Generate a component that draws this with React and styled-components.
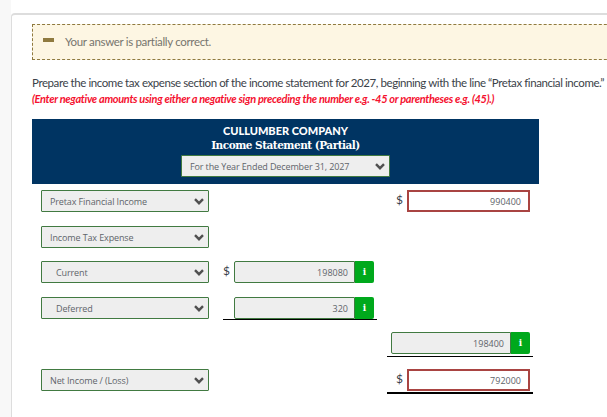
import React from "react";
import styled, { createGlobalStyle } from "styled-components";

const GlobalStyle = createGlobalStyle`
  html, body {
    margin: 0;
    padding: 0;
    height: 100%;
    overflow: hidden;
    background: #f8f8f8;
  }
`;

const Page = styled.div`
  width: 607px;
  height: 417px;
  overflow: hidden;
  padding: 0 0 0 11px;
  box-sizing: border-box;
  font-family: "Lato", sans-serif;
`;

const Main = styled.div`
  width: 640px;
  height: 417px;
  background: #fff;
  padding-top: 13px;
  box-sizing: border-box;
`;

const Card = styled.div`
  height: 404px;
  box-sizing: border-box;
  border-left: 1px solid #ddd;
  border-top: 2px solid #ddd;
  border-radius: 4px 0 0 0;
  padding: 9px 0 0 20px;
`;

const Alert = styled.div`
  display: flex;
  align-items: center;
  height: 36px;
  width: 620px;
  box-sizing: border-box;
  background: #fdf6e3;
  border: 1px dashed #8f7a3f;
  padding: 0 0 1px 10px;
  color: #77756e;
  font-size: 11.5px;
  letter-spacing: -0.33px;
`;

const Dash = styled.span`
  width: 11px;
  height: 4px;
  background: #8f7a3f;
  margin: -3px 11px 0 0;
`;

const Intro = styled.p`
  margin: 15px 0 0;
  white-space: nowrap;
  font-size: 11.5px;
  line-height: 15px;
  letter-spacing: -0.42px;
  color: #3b4249;
`;

const Hint = styled.em`
  display: block;
  margin-top: 1px;
  font-weight: 700;
  color: #f5112f;
  font-size: 11px;
  letter-spacing: -0.32px;
`;

const Sheet = styled.div`
  width: 507px;
  margin-top: 13px;
`;

const Header = styled.div`
  display: flex;
  flex-direction: column;
  align-items: center;
  height: 65px;
  box-sizing: border-box;
  background: #003462;
  color: #fff;
  padding-top: 4px;
`;

const Company = styled.div`
  font-weight: 900;
  font-size: 11px;
  line-height: 15px;
`;

const Title = styled.div`
  font-family: "DejaVu Serif", serif;
  font-weight: 700;
  font-size: 10.5px;
  line-height: 15px;
  letter-spacing: -0.5px;
  margin-bottom: 2px;
`;

const Select = styled.div`
  display: flex;
  align-items: center;
  justify-content: space-between;
  width: ${(p) => p.$width}px;
  height: 22px;
  box-sizing: border-box;
  background: #eee;
  border: 1px solid #417a41;
  border-radius: 1px;
  padding: 0 4px 0 ${(p) => p.$indent}px;
  font-family: "Open Sans", sans-serif;
  font-size: 9px;
  letter-spacing: -0.12px;
  color: #60646a;
`;

const Chevron = styled.svg`
  flex: none;
  width: 10px;
  height: 7px;
  fill: none;
  stroke: #505050;
  stroke-width: 2.4;
`;

const Rows = styled.div`
  padding: 6px 0 0 9px;
`;

const Row = styled.div`
  display: grid;
  grid-template-columns: 168px 14px 11px 140px 17px 5px 11px 123px;
  height: ${(p) => p.$height}px;
  align-items: start;
`;

const Amount = styled.div`
  position: relative;
  grid-column: ${(p) => p.$column};
  display: flex;
  height: 22px;
`;

const Field = styled.div`
  flex: 1;
  display: flex;
  align-items: center;
  justify-content: flex-end;
  box-sizing: border-box;
  height: 22px;
  padding-right: ${(p) => (p.$wrong ? "7px" : "6px")};
  font-family: "Open Sans", sans-serif;
  font-size: 9px;
  color: #60646a;
  background: ${(p) => (p.$wrong ? "#fff" : "#eee")};
  border: ${(p) => (p.$wrong ? "2px solid #a94442" : "1px solid #417a41")};
  border-radius: ${(p) => (p.$wrong ? "0" : "2px 0 0 2px")};
`;

const InfoBadge = styled.span`
  display: flex;
  align-items: center;
  justify-content: center;
  width: 19px;
  height: 22px;
  background: #00a91c;
  border-radius: 0 2px 2px 0;
  color: #fff;
  font-family: "DejaVu Serif", serif;
  font-weight: 700;
  font-size: 9px;
`;

const Currency = styled.span`
  grid-column: ${(p) => (p.$outer ? "7" : "3")};
  font-size: 12px;
  line-height: 20px;
  color: #3b4249;
`;

const Rule = styled.span`
  position: absolute;
  left: ${(p) => p.$left}px;
  right: -3px;
  bottom: ${(p) => p.$bottom}px;
  height: ${(p) => (p.$thick ? "2px" : "1px")};
  background: #000;
`;

const INNER = "4";
const OUTER = "8";
const OUTER_WIDE = "6 / 9";

const rows = [
  { label: "Pretax Financial Income", indent: 8, height: 36, outer: "990400" },
  { label: "Income Tax Expense", indent: 8, height: 35 },
  { label: "Current", indent: 14, height: 36, inner: "198080", currency: true },
  { label: "Deferred", indent: 14, height: 35, inner: "320", rule: true },
];

const Arrow = () => (
  <Chevron viewBox="0 0 10 7">
    <polyline points="1,1.2 5,5.2 9,1.2" />
  </Chevron>
);

const App = () => {
  return (
    <Page>
      <GlobalStyle />
      <Main>
        <Card>
          <Alert>
            <Dash />
            Your answer is partially correct.
          </Alert>
          <Intro>
            Prepare the income tax expense section of the income statement for 2027, beginning with the line “Pretax financial income.”
            <Hint>(Enter negative amounts using either a negative sign preceding the number e.g. -45 or parentheses e.g. (45).)</Hint>
          </Intro>
          <Sheet>
            <Header>
              <Company>CULLUMBER COMPANY</Company>
              <Title>Income Statement (Partial)</Title>
              <Select $width={209} $indent={8}>
                For the Year Ended December 31, 2027
                <Arrow />
              </Select>
            </Header>
            <Rows>
              {rows.map((row) => (
                <Row key={row.label} $height={row.height}>
                  <Select $width={168} $indent={row.indent}>
                    {row.label}
                    <Arrow />
                  </Select>
                  {row.currency && <Currency>$</Currency>}
                  {row.inner && (
                    <Amount $column={INNER}>
                      <Field>{row.inner}</Field>
                      <InfoBadge>i</InfoBadge>
                      {row.rule && <Rule $left={-11} $bottom={-1} />}
                    </Amount>
                  )}
                  {row.outer && <Currency $outer>$</Currency>}
                  {row.outer && (
                    <Amount $column={OUTER}>
                      <Field $wrong>{row.outer}</Field>
                    </Amount>
                  )}
                </Row>
              ))}
              <Row $height={37}>
                <Amount $column={OUTER_WIDE}>
                  <Field>198400</Field>
                  <InfoBadge>i</InfoBadge>
                  <Rule $left={-4} $bottom={-3} />
                </Amount>
              </Row>
              <Row $height={36}>
                <Select $width={168} $indent={8}>
                  Net Income / (Loss)
                  <Arrow />
                </Select>
                <Currency $outer>$</Currency>
                <Amount $column={OUTER}>
                  <Field $wrong>792000</Field>
                  <Rule $left={-20} $bottom={-3} $thick />
                </Amount>
              </Row>
            </Rows>
          </Sheet>
        </Card>
      </Main>
    </Page>
  );
};

export default App;
